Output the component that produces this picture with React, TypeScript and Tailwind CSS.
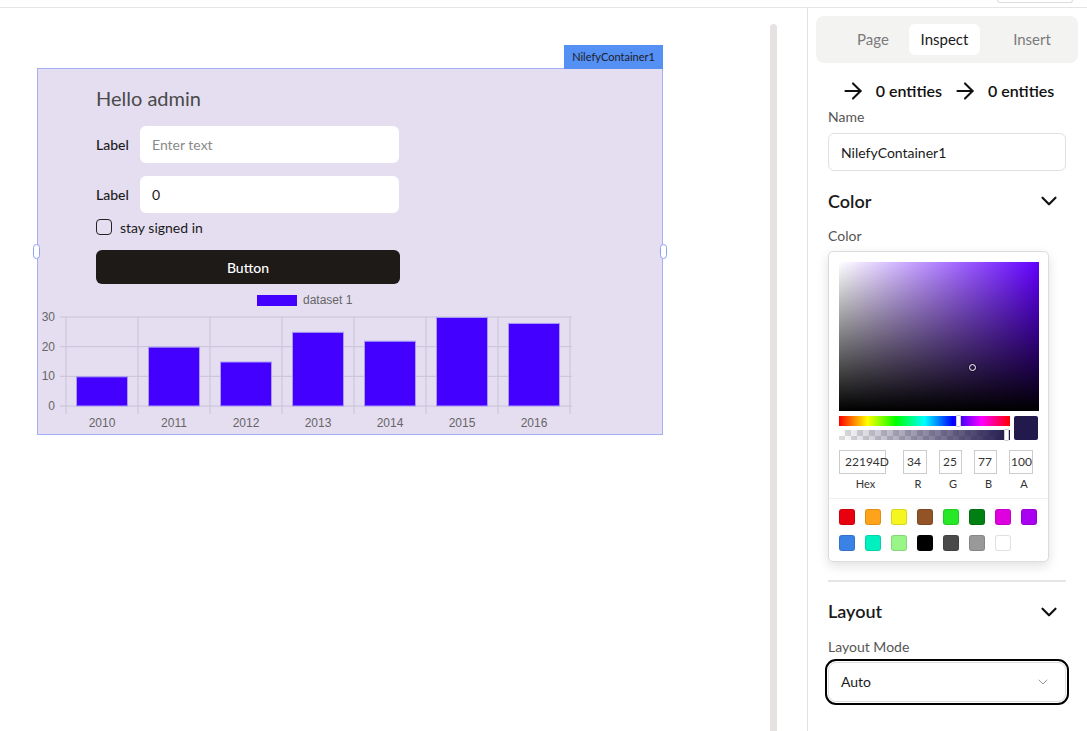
import { ArrowRight, ChevronDown } from "lucide-react";

const FONT = "font-['Lato','Noto_Sans',sans-serif]";

const BARS = [
  { year: "2010", value: 10 },
  { year: "2011", value: 20 },
  { year: "2012", value: 15 },
  { year: "2013", value: 25 },
  { year: "2014", value: 22 },
  { year: "2015", value: 30 },
  { year: "2016", value: 28 },
];

const SWATCHES = [
  "#e8000f",
  "#ffa31a",
  "#f5f51f",
  "#925426",
  "#27e827",
  "#008012",
  "#df00df",
  "#aa00f0",
  "#3b82e6",
  "#00f0c0",
  "#99f588",
  "#000000",
  "#4a4a4a",
  "#999999",
  "#ffffff",
];

function BarChart() {
  const base = 116;
  const scale = 89 / 30;
  const cols = [28, 100, 172, 244, 316, 388, 460, 532];
  const grid = "#c9c2d8";

  return (
    <svg width="560" height="146" className="mt-[6px] block">
      <rect x="219" y="5" width="40" height="11" fill="#4400ff" />
      <text x="265" y="14" fontSize="12" fill="#666" fontFamily="Liberation Sans, sans-serif">
        dataset 1
      </text>

      {[30, 20, 10, 0].map((v) => {
        const y = base - v * scale;
        return (
          <g key={v}>
            <line x1="22" x2="534" y1={y} y2={y} stroke={grid} strokeWidth="1" />
            <text
              x="17"
              y={y + 4}
              fontSize="12"
              fill="#666"
              textAnchor="end"
              fontFamily="Liberation Sans, sans-serif"
            >
              {v}
            </text>
          </g>
        );
      })}

      {cols.map((x) => (
        <line key={x} x1={x} x2={x} y1="27" y2="124" stroke={grid} strokeWidth="1" />
      ))}

      {BARS.map((b, i) => {
        const h = b.value * scale;
        return (
          <g key={b.year}>
            <rect
              x={cols[i] + 10.5}
              y={base - h + 0.5}
              width="51"
              height={h - 0.5}
              fill="#4400ff"
              stroke="#a99cf4"
              strokeWidth="1"
            />
            <text
              x={cols[i] + 36}
              y="137"
              fontSize="12"
              fill="#666"
              textAnchor="middle"
              fontFamily="Liberation Sans, sans-serif"
            >
              {b.year}
            </text>
          </g>
        );
      })}
    </svg>
  );
}

function Canvas() {
  return (
    <div className="flex flex-1">
      <div className="flex-1 pl-[37px] pt-[60px]">
        <div className="relative h-[367px] w-[626px] border border-[#a4b0f6] bg-[#e4def0]">
          <div className="absolute -right-px bottom-full flex h-[24px] w-[99px] items-center justify-center bg-[#5590f5] text-[11px] text-[#1c1c2a]">
            NilefyContainer1
          </div>
          <div className="absolute -left-[5px] top-[175px] h-[15px] w-[7px] rounded-full border border-[#8fa0f5] bg-white" />
          <div className="absolute -right-[5px] top-[175px] h-[15px] w-[7px] rounded-full border border-[#8fa0f5] bg-white" />

          <div className="flex flex-col pl-[58px] pt-[15px]">
            <h2 className="text-[20px] leading-[28px] text-[#4a4a4a]">Hello admin</h2>

            <div className="mt-[14px] flex items-center">
              <span className="w-[44px] text-[14px] font-medium text-[#1a1a1a]">Label</span>
              <div className="flex h-[37px] w-[259px] items-center rounded-md bg-white pl-[12px] text-[14px] text-[#8a8a8a]">
                Enter text
              </div>
            </div>

            <div className="mt-[13px] flex items-center">
              <span className="w-[44px] text-[14px] font-medium text-[#1a1a1a]">Label</span>
              <div className="flex h-[37px] w-[259px] items-center rounded-md bg-white pl-[12px] text-[14px] text-[#1a1a1a]">
                0
              </div>
            </div>

            <div className="mt-[6px] flex h-[16px] items-center gap-[8px]">
              <div className="h-[16px] w-[16px] rounded-[4px] border-[1.5px] border-[#222]" />
              <span className="text-[14px] text-[#1a1a1a]">stay signed in</span>
            </div>

            <button
              type="button"
              className="mt-[15px] h-[34px] w-[304px] rounded-[6px] bg-[#1e1a18] text-[14px] font-medium text-white"
            >
              Button
            </button>
          </div>

          <BarChart />
        </div>
      </div>

      <div className="mr-[30px] mt-[16px] w-[7px] rounded-t-full bg-[#e6e2e2]" />
    </div>
  );
}

function ColorPicker() {
  return (
    <div className="mt-[5px] w-[221px] rounded-[5px] border border-[#dcdcdc] bg-white shadow-[0_4px_12px_rgba(0,0,0,0.12)]">
      <div className="px-[10px] pt-[10px]">
        <div className="relative h-[149px] w-[200px] bg-[#6200ff]">
          <div className="absolute inset-0 bg-linear-to-r from-white to-transparent" />
          <div className="absolute inset-0 bg-linear-to-t from-black to-transparent" />
          <div className="absolute left-[130px] top-[102px] h-[7px] w-[7px] rounded-full border-[1.5px] border-white shadow-[0_0_0_1px_rgba(0,0,0,0.4)]" />
        </div>

        <div className="mt-[5px] flex gap-[4px]">
          <div className="flex w-[172px] flex-col gap-[4px]">
            <div className="relative h-[10px] bg-[linear-gradient(to_right,#f00,#ff0,#0f0,#0ff,#00f,#f0f,#f00)]">
              <div className="absolute -top-px left-[117px] h-[12px] w-[5px] rounded-[1px] border border-[#ccc] bg-white" />
            </div>
            <div className="relative h-[10px] bg-[repeating-conic-gradient(#ddd_0_25%,#fff_0_50%)] bg-size-[12px_12px]">
              <div className="absolute inset-0 bg-linear-to-r from-transparent to-[#22194d]" />
              <div className="absolute -top-px right-[1px] h-[12px] w-[5px] rounded-[1px] border border-[#ccc] bg-white" />
            </div>
          </div>
          <div className="h-[24px] w-[24px] rounded-[2px] bg-[#22194d]" />
        </div>

        <div className="mt-[10px] flex text-[12px] text-[#333]">
          <div className="flex w-[64px] flex-col items-start">
            <div className="flex h-[24px] w-[47px] items-center border border-[#ccc] pl-[5px]">22194D</div>
            <div className="mt-[2px] w-[47px] pl-[6px] text-center text-[11px]">Hex</div>
          </div>
          <div className="flex w-[36px] flex-col items-start">
            <div className="flex h-[24px] w-[24px] items-center border border-[#ccc] pl-[3px]">34</div>
            <div className="mt-[2px] w-[24px] pl-[6px] text-center text-[11px]">R</div>
          </div>
          <div className="flex w-[35px] flex-col items-start">
            <div className="flex h-[24px] w-[23px] items-center border border-[#ccc] pl-[3px]">25</div>
            <div className="mt-[2px] w-[23px] pl-[5px] text-center text-[11px]">G</div>
          </div>
          <div className="flex w-[35px] flex-col items-start">
            <div className="flex h-[24px] w-[23px] items-center border border-[#ccc] pl-[3px]">77</div>
            <div className="mt-[2px] w-[23px] pl-[6px] text-center text-[11px]">B</div>
          </div>
          <div className="flex flex-col items-start">
            <div className="flex h-[24px] w-[24px] items-center overflow-hidden border border-[#ccc] pl-[1px]">100</div>
            <div className="mt-[2px] w-[24px] pl-[6px] text-center text-[11px]">A</div>
          </div>
        </div>
      </div>

      <div className="mt-[5px] grid grid-cols-[repeat(8,16px)] gap-x-[10px] gap-y-[10px] border-t border-[#eee] px-[10px] pb-[10px] pt-[10px]">
        {SWATCHES.map((c) => (
          <div
            key={c}
            className="h-[16px] w-[16px] rounded-[3px] shadow-[inset_0_0_0_1px_rgba(0,0,0,0.12)]"
            style={{ background: c }}
          />
        ))}
      </div>
    </div>
  );
}

function Inspector() {
  return (
    <aside className="w-[280px] border-l border-[#e2e2e2] pl-[8px] pr-[9px] pt-[8px]">
      <div className="flex h-[47px] items-center rounded-lg bg-[#f3f3f2] pl-[21px] text-[15px]">
        <div className="flex h-[31px] w-[72px] items-center justify-center text-[#7a7a7a]">Page</div>
        <div className="flex h-[31px] w-[71px] items-center justify-center rounded-md bg-white text-[#1a1a1a]">
          Inspect
        </div>
        <div className="ml-[16px] flex h-[31px] w-[72px] items-center justify-center text-[#7a7a7a]">Insert</div>
      </div>

      <div className="mt-[15px] flex items-center justify-center gap-[10px] text-[16px] font-semibold text-[#111]">
        <ArrowRight size={26} strokeWidth={1.9} />
        <span>0 entities</span>
        <ArrowRight size={26} strokeWidth={1.9} />
        <span>0 entities</span>
      </div>

      <div className="pl-[12px] pr-[12px]">
        <div className="mt-[3px] text-[14px] leading-[20px] text-[#555]">Name</div>
        <div className="mt-[6px] flex h-[38px] items-center rounded-md border border-[#e0e0e0] pl-[12px] text-[14px] text-[#1a1a1a]">
          NilefyContainer1
        </div>

        <div className="mt-[16px] flex h-[28px] items-center justify-between">
          <span className="text-[18px] font-semibold text-[#1a1a1a]">Color</span>
          <ChevronDown size={26} strokeWidth={2} className="mr-[4px] text-[#111]" />
        </div>
        <div className="mt-[11px] text-[14px] leading-[20px] text-[#555]">Color</div>
        <ColorPicker />

        <div className="mt-[18px] border-t-2 border-[#e6e6e6]" />

        <div className="mt-[16px] flex h-[28px] items-center justify-between">
          <span className="text-[18px] font-semibold text-[#1a1a1a]">Layout</span>
          <ChevronDown size={26} strokeWidth={2} className="mr-[4px] text-[#111]" />
        </div>
        <div className="mt-[11px] text-[14px] leading-[20px] text-[#555]">Layout Mode</div>
        <div className="mt-[5px] flex h-[40px] items-center justify-between rounded-lg border border-[#dedede] pl-[12px] pr-[14px] text-[14px] text-[#1a1a1a] outline-2 outline-offset-[1px] outline-black">
          <span>Auto</span>
          <ChevronDown size={16} strokeWidth={1.5} className="text-[#999]" />
        </div>
      </div>
    </aside>
  );
}

export default function App() {
  return (
    <div className={`flex h-[731px] w-[1087px] flex-col overflow-hidden bg-white ${FONT}`}>
      <header className="flex h-[8px] shrink-0 justify-end border-b border-[#e5e5e5]">
        <div className="mr-[14px] h-[3px] w-[76px] rounded-b-md border border-t-0 border-[#ddd]" />
      </header>
      <div className="flex min-h-0 flex-1">
        <Canvas />
        <Inspector />
      </div>
    </div>
  );
}
